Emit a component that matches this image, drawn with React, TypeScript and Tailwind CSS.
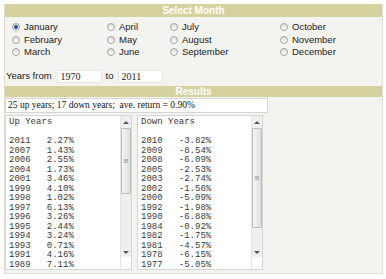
import React from 'react';

const months = [
  ['January', 'April', 'July', 'October'],
  ['February', 'May', 'August', 'November'],
  ['March', 'June', 'September', 'December'],
];

const upYears = [
  ['2011', '2.27%'], ['2007', '1.43%'], ['2006', '2.55%'], ['2004', '1.73%'],
  ['2001', '3.46%'], ['1999', '4.10%'], ['1998', '1.02%'], ['1997', '6.13%'],
  ['1996', '3.26%'], ['1995', '2.44%'], ['1994', '3.24%'], ['1993', '0.71%'],
  ['1991', '4.16%'], ['1989', '7.11%'],
];

const downYears = [
  ['2010', '-3.82%'], ['2009', '-8.54%'], ['2008', '-6.09%'], ['2005', '-2.53%'],
  ['2003', '-2.74%'], ['2002', '-1.56%'], ['2000', '-5.09%'], ['1992', '-1.98%'],
  ['1990', '-6.88%'], ['1984', '-0.92%'], ['1982', '-1.75%'], ['1981', '-4.57%'],
  ['1978', '-6.15%'], ['1977', '-5.05%'],
];

const Radio: React.FC<{ checked?: boolean }> = ({ checked }) => (
  <span className="w-[8px] h-[8px] rounded-full border border-[#a4a4a4] bg-[linear-gradient(#dcdcdc,#ffffff)] flex items-center justify-center shrink-0">
    {checked && <span className="w-[4px] h-[4px] rounded-full bg-[#1f4f8f]" />}
  </span>
);

const Bar: React.FC<{ title: string; h: string }> = ({ title, h }) => (
  <div className={`${h} bg-[#d6d29f] flex items-center justify-center text-white font-bold text-[10px] leading-none font-['Liberation_Sans',Arial,sans-serif]`}>
    {title}
  </div>
);

// fake textarea scrollbar, thumb height varies per box
const Scroll: React.FC<{ thumb: string }> = ({ thumb }) => (
  <div className="w-[11px] flex flex-col items-center bg-[#efefef] border-l border-[#e4e4e4]">
    <div className="h-[12px] flex items-center justify-center">
      <span className="w-0 h-0 border-l-[3px] border-r-[3px] border-b-[3px] border-l-transparent border-r-transparent border-b-[#555]" />
    </div>
    <div className={`${thumb} w-[10px] border border-[#bdbdbd] rounded-[1px] bg-[linear-gradient(90deg,#f6f6f6,#dedede)] flex items-center justify-center`}>
      <span className="text-[7px] leading-none text-[#8a8a8a] font-['DejaVu_Sans',sans-serif]">≡</span>
    </div>
    <div className="flex-1" />
    <div className="h-[10px] flex items-center justify-center">
      <span className="w-0 h-0 border-l-[3px] border-r-[3px] border-t-[3px] border-l-transparent border-r-transparent border-t-[#555]" />
    </div>
    <div className="h-[12px] w-full bg-white flex items-end justify-end pr-[1px] pb-[1px]">
      <span className="text-[6px] leading-none text-[#bbb] font-['DejaVu_Sans',sans-serif]">⋰</span>
    </div>
  </div>
);

const Listing: React.FC<{ title: string; rows: string[][]; thumb: string; w: string }> = ({ title, rows, thumb, w }) => (
  <div className={`${w} h-[155px] bg-white border border-[#d6d6d6] flex`}>
    <pre className="flex-1 pl-[3px] pt-[2px] text-[9px] leading-[9.5px] text-[#3a3a3a] font-['Liberation_Mono','Courier_New',monospace] overflow-hidden">
      {title + '\n\n' + rows.map(([y, v]) => `${y}   ${v}`).join('\n')}
    </pre>
    <Scroll thumb={thumb} />
  </div>
);

export default function App() {
  return (
    <div className="w-[386px] h-[279px] bg-white pt-[4px] pl-[4px]">
      <div className="w-[379px] h-[270px] bg-[#f3f3f0] border-l border-r border-b border-[#e0ded2] flex flex-col">
        <Bar title="Select Month" h="h-[13px]" />

        <div className="pl-[7px] pt-[4px] grid grid-cols-[95px_63px_110px_1fr] text-[9.5px] text-[#222] font-['Liberation_Sans',Arial,sans-serif]">
          {months.map((row, r) =>
            row.map((m, c) => (
              <label key={`${r}-${c}`} className="h-[12.5px] flex items-center gap-[4px]">
                <Radio checked={m === 'January'} />
                <span>{m}</span>
              </label>
            ))
          )}
        </div>

        <div className="mt-[10px] h-[15px] pl-[1px] flex items-center text-[9.5px] text-[#222] font-['Liberation_Sans',Arial,sans-serif]">
          <span>Years from</span>
          <span className="ml-[5px] w-[45px] h-[13px] bg-white border border-[#e6e6e6] pl-[3px] flex items-center text-[10px] font-['Liberation_Serif','Times_New_Roman',serif]">1970</span>
          <span className="ml-[4px]">to</span>
          <span className="ml-[4px] w-[45px] h-[13px] bg-white border border-[#e6e6e6] pl-[3px] flex items-center text-[10px] font-['Liberation_Serif','Times_New_Roman',serif]">2011</span>
        </div>

        <div className="mt-[2.5px]">
          <Bar title="Results" h="h-[11px]" />
        </div>

        <div className="mt-[1px] w-[263px] h-[15px] bg-white border border-[#d6d6d6] pl-[2px] flex items-center text-[9.5px] text-[#111] font-['Liberation_Serif','Times_New_Roman',serif] whitespace-pre">
          25 up years; 17 down years;  ave. return = 0.90%
        </div>

        <div className="mt-[2px] flex gap-[5px]">
          <Listing title="Up Years" rows={upYears} thumb="h-[66px]" w="w-[127px]" />
          <Listing title="Down Years" rows={downYears} thumb="h-[100px]" w="w-[126px]" />
        </div>
      </div>
    </div>
  );
}
